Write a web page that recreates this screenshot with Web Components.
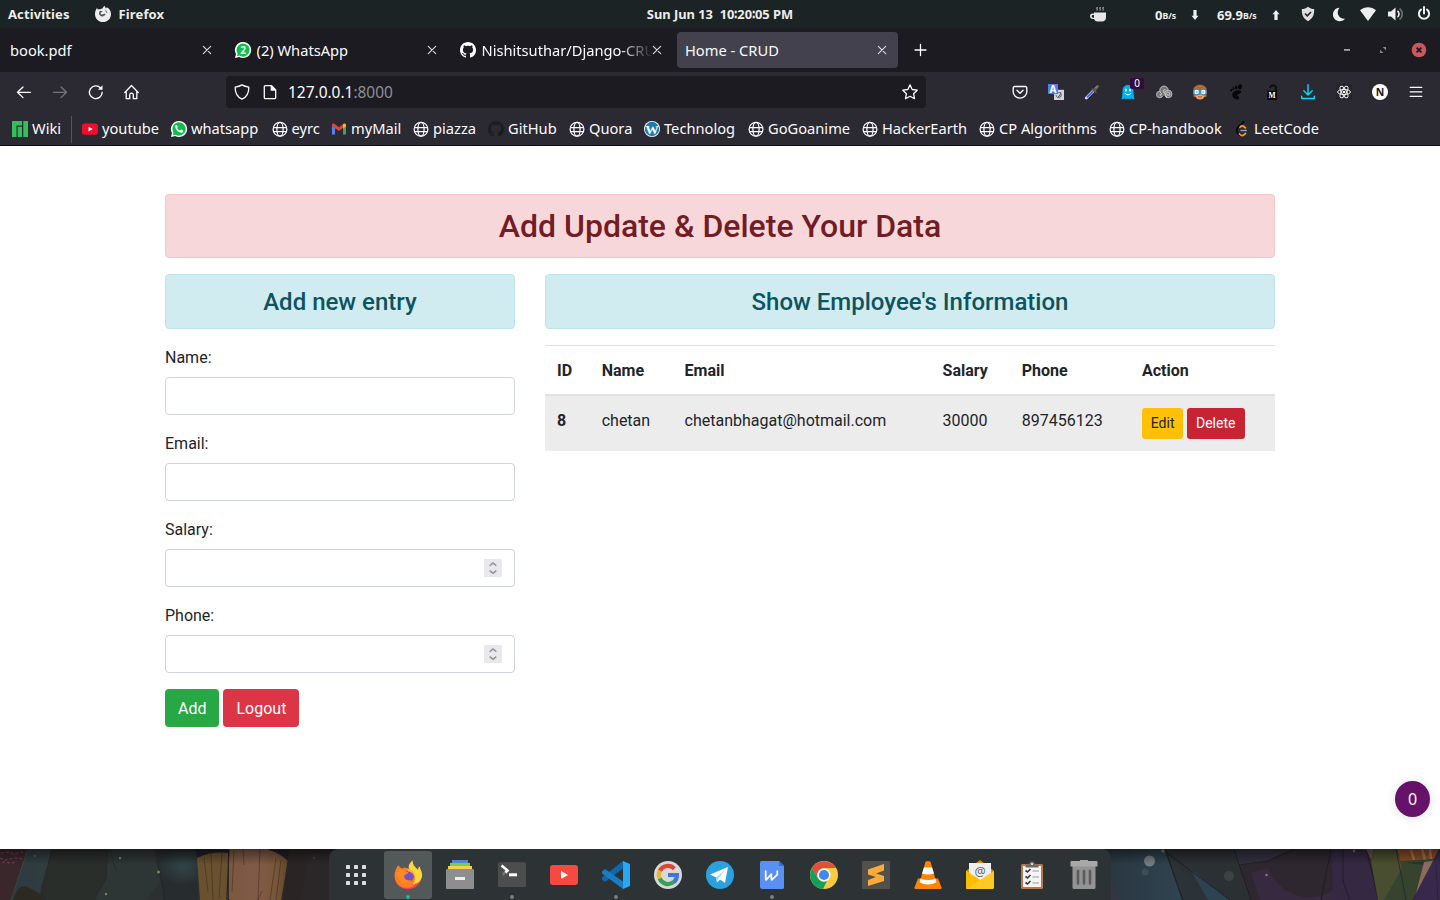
<!DOCTYPE html>
<html lang="en">
<head>
<meta charset="utf-8">
<title>Home - CRUD</title>
<style>
html,body{margin:0;height:100%;overflow:hidden}
body{font-family:"Noto Sans",sans-serif}
</style>
</head>
<body>
<desktop-screen></desktop-screen>
<script>
const define = (name, html, setup) => {
  const t = document.createElement('template');
  t.innerHTML = html;
  customElements.define(name, class extends HTMLElement {
    connectedCallback() {
      if (this.shadowRoot) return;
      this.attachShadow({mode: 'open'}).append(t.content.cloneNode(true));
      if (setup) setup(this, this.shadowRoot);
    }
  });
};

const globe = '<g fill="none" stroke="#fbfbfe" stroke-width="1.25"><circle cx="8" cy="8.300" r="6.9"/><ellipse cx="8" cy="8.300" rx="3.1" ry="6.9"/><path d="M1.3 6.5h13.4M1.3 10.5h13.4"/></g>';
const cat = 'M8 0C3.58 0 0 3.58 0 8c0 3.54 2.29 6.53 5.47 7.59.4.07.55-.17.55-.38 0-.19-.01-.82-.01-1.49-2.01.37-2.53-.49-2.69-.94-.09-.23-.48-.94-.82-1.13-.28-.15-.68-.52-.01-.53.63-.01 1.08.58 1.23.82.72 1.21 1.87.87 2.33.66.07-.52.28-.87.51-1.07-1.78-.2-3.64-.89-3.64-3.95 0-.87.31-1.59.82-2.15-.08-.2-.36-1.02.08-2.12 0 0 .67-.21 2.2.82.64-.18 1.32-.27 2-.27s1.36.09 2 .27c1.53-1.04 2.2-.82 2.2-.82.44 1.1.16 1.92.08 2.12.51.56.82 1.27.82 2.15 0 3.07-1.87 3.75-3.65 3.95.29.25.54.73.54 1.48 0 1.07-.01 1.93-.01 2.2 0 .21.15.46.55.38A8.01 8.01 0 0 0 16 8c0-4.42-3.58-8-8-8z';
const line = (d, w = 1.3, c = '#fbfbfe') => `<path d="${d}" fill="none" stroke="${c}" stroke-width="${w}" stroke-linecap="round" stroke-linejoin="round"/>`;

/* 16-unit glyphs */
const small = {
  globe,
  foxmono: '<path fill="#ededed" d="M9.3-.2c.9.9 1.300 2 1.500 2.800.6-.3.900-.7 1-1.300C14.800 2.800 16 5.300 16 8.200 16 12.600 12.400 16 8 16S0 12.600 0 8.200c0-2.500.8-4.700 2-6.100l.8 1.500c.700-.3 1.500-.3 2.300-.1.700-.6 1.500-.9 2.400-.9.300-1 .9-1.800 1.800-2.800z"/><path d="M5 4.800c1 .3 1.900.2 2.700.8-.7.900-1.900.6-2.200 1.600.4 1.300 2 1.700 3.200.9.700-.4 1.300-.3 1.800 0-.5 1.600-2.100 2.600-3.800 2.300C4.900 10 3.700 8.600 4 6.800c.2-.7.500-1.500 1-2zM9.500 3.500c1.800.9 2.800 2.300 2.900 4.200-.3-.7-.7-1.200-1.400-1.500-.1-1.100-.6-1.900-1.500-2.700z" fill="#1c2324" opacity=".75"/>',
  coffee: '<path fill="#e6e6e6" d="M4 6.500h12v5a4.200 4.200 0 0 1-4.200 4H8.200A4.200 4.200 0 0 1 4 13H3a3 3 0 0 1-3-2.700A2.700 2.700 0 0 1 2.700 7.500H4zM4 9H3a1.300 1.300 0 1 0 0 2.700h1z"/><path d="M7 4.500c.8-1-.8-1.800.3-3.500M10 4.500c.8-1-.8-1.800.3-3.500M13 4.500c.8-1-.8-1.800.3-3.500" fill="none" stroke="#ccc" stroke-width="1"/>',
  down: '<path fill="#eee" d="M6.400 4h3.200v5.800h1.900L8 14 4.500 9.800h1.900z"/>',
  up: '<path fill="#eee" d="M6.400 14h3.200V8.300h1.900L8 4 4.500 8.300h1.900z"/>',
  guard: '<path fill="#dedede" d="M8 .8c1.900 1.600 3.900 2.300 6.200 2.300.1 5.300-1 9.300-6.200 12.100C2.800 12.400 1.700 8.400 1.800 3.100 4.100 3.100 6.100 2.400 8 .8z"/><path d="M5 7.500l2.300 2.300L11 6" fill="none" stroke="#222" stroke-width="1.600"/>',
  moon: '<path fill="#f0f0f0" d="M8.600 1.700a6.800 6.800 0 1 0 5.400 11.100C7.900 13.300 4.300 6.500 8.600 1.700z"/>',
  wifi: '<path fill="#eee" d="M0 4.300C4.700.2 11.300.2 16 4.300L8 15z"/>',
  volume: '<path fill="#eee" d="M0 5.500h3L7.500 1.500v13L3 10.500H0z"/><path d="M9.500 4.800c2 1.600 2 4.800 0 6.400" fill="none" stroke="#eee" stroke-width="1.600"/><path d="M11.600 2.300c3.500 3 3.500 8.400 0 11.400" fill="none" stroke="#6c7273" stroke-width="1.600"/>',
  power: '<path d="M5 3.600a5.100 5.100 0 1 0 6 0M8 1v6.500" fill="none" stroke="#eee" stroke-width="2" stroke-linecap="round"/>',
  close: line('M4.300 4.300l7.400 7.400M11.700 4.300l-7.400 7.400', 1.100, '#dddce2'),
  plus: line('M7.500 2.500v11M2 8h11', 1.300),
  watwo: '<path fill="#fff" d="M8 0a8 8 0 1 1-3.700 15L0 16l1-4A8 8 0 0 1 8 0z"/><path fill="#0cbf4a" d="M8 1.400a6.600 6.600 0 1 1-3.500 12.200L1.900 14.200l.7-2.700A6.600 6.600 0 0 1 8 1.400z"/><text x="8" y="11.600" font-family="Open Sans,sans-serif" font-size="10" font-weight="700" text-anchor="middle" fill="#fff">2</text>',
  cat: `<path fill="#fff" d="${cat}"/>`,
  catdark: `<path fill="#1b1c20" d="${cat}"/>`,
  min: '<path fill="#a5a4a9" d="M5 7h6v1.800H5z"/>',
  max: '<path fill="#8e8d93" d="M7.700 5H11v3.300zM5 7.700V11h3.300z"/>',
  winclose: '<circle cx="8" cy="8" r="7.300" fill="#cc575d"/><path d="M5.600 5.600l4.800 4.800m0-4.800l-4.800 4.800" stroke="#1c1b22" stroke-width="1.900"/>',
  back: line('M14.500 8.300H1.500M7 3L1.500 8.300 7 13.600'),
  forward: line('M1.500 8.300h13M9 3L14.500 8.300 9 13.600', 1.300, '#77767e'),
  reload: line('M14.200 8.300A6.400 6.400 0 1 1 12.600 4', 1.350) + '<path fill="#fbfbfe" d="M14.500 1.200v4.600H9.900z"/>',
  home: line('M.8 8.500L7.500 1.500l6.700 7M2.200 7.500v7.200h3.500v-3.800a1.800 1.800 0 0 1 3.600 0v3.800h3.500V7.500'),
  shield: line('M8 .9C5.500 2.400 3.200 2.900 1.200 3.200 1 8.700 3 12.800 8 15.200c5-2.400 7-6.500 6.800-12C12.800 2.900 10.500 2.400 8 .9z'),
  page: line('M9.500 1.700H3.300a1 1 0 0 0-1 1v11a1 1 0 0 0 1 1h9.400a1 1 0 0 0 1-1V6z') + '<path fill="#fbfbfe" d="M8.700 1.500h1.200L14 5.700v1H8.700z"/>',
  star: line('M8 .9l2.200 4.600 5 .7-3.600 3.500.9 5L8 12.300l-4.500 2.400.9-5L.8 6.200l5-.7z'),
  pocket: line('M2.500 2.500h11a1.300 1.300 0 0 1 1.300 1.300v4a6.800 6.300 0 0 1-13.600 0v-4a1.300 1.300 0 0 1 1.300-1.300zM5 6.300l3 3 3-3', 1.350),
  translate: '<path fill="#d3d5d9" d="M6 5.800h10V16H6z"/><path d="M9 10c2-3 5-1 4 2s-4 2-2 0M8 11c1 4 3 3 5-3" fill="none" stroke="#4e6175"/><path fill="#4f7df2" d="M0 0h10v10H0z"/><text x="5" y="8.700" font-family="Noto Sans" font-size="10" font-weight="700" text-anchor="middle" fill="#fff">A</text>',
  picker: '<path d="M2.300 14L9 7.300" stroke="#dedff5" stroke-width="2.800" stroke-linecap="round"/><path d="M3 13.300l6-6" stroke="#3c63e0" stroke-width="1.800"/><path d="M8.500 5l3.300 3.300" stroke="#4f4c4a" stroke-width="2" stroke-linecap="round"/><path d="M10.500 6L13.500 2.500" stroke="#5f5c59" stroke-width="3" stroke-linecap="round"/><path d="M11.500 4l2-2" stroke="#a5a09c" stroke-width="1"/>',
  ghost: '<path fill="#00b2f2" d="M2.500 7.300C2.500 3 5 1 8 1s5.500 2 5.500 6.300c0 2.700.2 5 1 7.700-1.500.6-2.400.1-3.200-.7-.9 1.200-2 1.500-3.300.3-1.300 1.200-2.400.9-3.300-.3-.8.800-1.700 1.300-3.200.7.800-2.700 1-5 1-7.700z"/><path d="M6 4.800v2.400M10 4.800v2.400" stroke="#fff" stroke-width="1.700"/><path d="M5 9c1 2.400 5 2.400 6 0" fill="none" stroke="#fff"/>',
  spiral: '<g fill="#77777a" stroke="#c6c6c6" stroke-width=".9"><circle cx="3.700" cy="10.500" r="3.200"/><circle cx="8" cy="6.300" r="4.200"/><circle cx="12.300" cy="10" r="3.700"/></g><path fill="#77777a" d="M6 8h5v4H6z"/><path d="M9.500 8c-3 1-3-3 0-2.200M12 10c-1.500 2 2 2.300 1.900 0-.2-3.200-5-2-3.900 1.200M4 10.500c-.5 1.400 1.600 1 1-.3M8 8l3 6" fill="none" stroke="#ddd" stroke-width=".9"/>',
  face: '<path fill="#b06a2c" d="M1 8C1 3 4 .8 8 .8S15 3 15 8l-.7 5H1.700z"/><path fill="#eaa76b" d="M3.400 6h9.200v5.500c0 2.600-2.300 4-4.600 4s-4.600-1.400-4.600-4z"/><circle cx="4.700" cy="8" r="2.900" fill="#fff" stroke="#3b87c6" stroke-width="1.200"/><circle cx="11.300" cy="8" r="2.900" fill="#fff" stroke="#3b87c6" stroke-width="1.200"/><circle cx="5" cy="8" r=".8" fill="#338fcf"/><circle cx="11" cy="8" r=".8" fill="#338fcf"/><path d="M6 12.900h4" stroke="#b24b39"/>',
  foot: '<g fill="#08080a"><ellipse cx="12" cy="2.700" rx="2" ry="2.700" transform="rotate(20 12 2.700)"/><ellipse cx="8.200" cy="3.300" rx="1.200" ry="1.900"/><ellipse cx="5.500" cy="4.500" rx="1" ry="1.600"/><ellipse cx="3.300" cy="6.200" rx=".9" ry="1.400"/><path d="M12.700 6.800C9 4.800 4 8 4.200 11c.2 2.700 3 4.700 5.300 4.400 2-.3 2.400-2.500.6-3.100-1.200-.4-1.600-1.200-.3-1.700 2.200-.8 4.700-2.600 2.900-3.800z"/></g>',
  lock: '<path d="M11.800 7V3.500C11.500.3 6.500.5 6 4" fill="none" stroke="#08080a" stroke-width="1.700"/><path fill="#08080a" d="M3.300 6.800h9.700V16H3.300z"/><text x="8.100" y="14" font-family="Liberation Serif" font-size="7.500" font-weight="700" text-anchor="middle" fill="#fff">M</text>',
  download: '<path d="M8 .8v10M3.800 6.800L8 11l4.200-4.200M1.700 12.300v2.200h12.600v-2.200" fill="none" stroke="#00ddff" stroke-width="1.400" stroke-linecap="round" stroke-linejoin="round"/>',
  react: '<path fill="#25242b" d="M0 0h16v16H0z"/><g fill="none" stroke="#eee" stroke-width="1"><ellipse cx="8" cy="8" rx="6.500" ry="2.500"/><ellipse cx="8" cy="8" rx="6.500" ry="2.500" transform="rotate(60 8 8)"/><ellipse cx="8" cy="8" rx="6.500" ry="2.500" transform="rotate(120 8 8)"/></g><circle cx="8" cy="8" r="1.300" fill="#fff"/>',
  nletter: '<circle cx="8" cy="8" r="8" fill="#fff"/><text x="8" y="11.700" font-family="Noto Sans" font-size="10.500" font-weight="700" text-anchor="middle" fill="#1c1b22">N</text>',
  menu: line('M2.200 3.300h11.600M2.200 7.800h11.600M2.200 12.300h11.600', 1.300),
  manjaro: '<path fill="#35bf5c" d="M0 0h10v4.500H4.500V16H0zM5.700 5.700H10V16H5.700zM11.300 0H16v16h-4.700z"/>',
  youtube: '<rect y="2.400" width="16" height="11.400" rx="2.800" fill="#f60b2b"/><path fill="#fff" d="M6.500 5.700l4.200 2.400-4.200 2.400z"/>',
  whatsapp: '<path fill="#fff" d="M8 0a8 8 0 1 1-3.700 15L0 16l1-4A8 8 0 0 1 8 0z"/><path fill="#0cbf4a" d="M8 1.300a6.700 6.700 0 1 1-3.500 12.400l-2.700.5.700-2.600A6.700 6.700 0 0 1 8 1.300z"/><path fill="#fff" d="M4.400 4.500c.8-1 1.500-.8 1.800-.1l.6 1.500c0 .4-.5.700-.6 1 .7 1.300 1.600 2.100 2.900 2.600.4-.2.700-.8 1.100-.9l1.800.9c.5.500 0 1.800-1 2.200-3 .9-7.700-3.800-6.600-7.200z"/>',
  gmail: '<path fill="#4f83ee" d="M1 4.500v9h3V7z"/><path fill="#3ba653" d="M12 7v6.500h3v-9z"/><path fill="#e54335" d="M1 3.400c.2-1 1.500-1.300 2.300-.7L8 6.300l4.700-3.600L12.900 6.300 8 10 1 5z"/><path fill="#f6bc16" d="M12 3.300c1-1.300 3-.9 3 .9v1.300L12 7.500z"/>',
  wordpress: '<circle cx="8" cy="8" r="8" fill="#fff"/><circle cx="8" cy="8" r="7.200" fill="#1b7db1"/><text x="8" y="12.600" font-family="Liberation Serif" font-size="13.500" font-weight="700" text-anchor="middle" fill="#fff">W</text>',
  leetcode: '<path d="M9.500 1L4 6.500c-2.500 2.700-1.500 4.200.3 6.100L6 14.300" fill="none" stroke="#08080a" stroke-width="1.900" stroke-linecap="round"/><path d="M6 6.300c1.300-1.600 2.700-1.900 4.200-.5l1.200 1.100M5.500 13c1.800 2 3.400 2 5 .4l.9-.9" fill="none" stroke="#f6a21c" stroke-width="1.800" stroke-linecap="round"/><path d="M6.500 9.500H13" stroke="#9b9ba0" stroke-width="1.500"/>',
  more: line('M2.500 2.500L8 8l-5.500 5.500M8.500 2.500L14 8l-5.500 5.500', 1.250),
  spin: '<path d="M4.700 5.800L8 3l3.300 2.800M4.700 10.600L8 13.300l3.300-2.700" fill="none" stroke="#8d8d97" stroke-width="1.400"/>'
};

/* 28-unit launcher artwork */
const large = {
  apps: '<g fill="#dedede">' + [4, 12, 20].map(y => [4, 12, 20].map(x => `<rect x="${x}" y="${y}" width="4" height="4" rx=".4"/>`).join('')).join('') + '</g>',
  firefox: '<path fill="#ee405c" d="M1 17C2 24 7 28.200 14 28.200S27.500 23 27.700 15L26 10z"/><path fill="#ff7d22" d="M4 4.200l4 3.600c2-2 4-1.700 6 .2 4 1 8.600 4 9 9.500.2 5-4 9.600-9.500 9.600C6 27 .7 22 .5 15 .4 10.500 2.500 7 4 4.200z"/><path fill="#ffd83c" d="M18.500-.8c-3 3-5 6-3 9.300 1 2 5.500 4 5.500 8 0 2.800-1 5-2 6.300 4 1 8.900-3 9.100-8.500.2-4.300-2.500-5.800-2-8.800-1.500.6-2 2-2 3.200C22 6.700 18.700 4.700 18.500-.8z"/><circle cx="14.300" cy="15.200" r="5.600" fill="#7b4ec4"/><path fill="#ff8a24" d="M4 8.500c3-1 6 1 10 2.500 1 2-3 2-3.500 3.600-1.500 2.500 2 6.200 7 4.400-1.500 3-6 4.500-10 2.500-4-3-5-8-3.500-13z"/><path fill="#ffac31" d="M13 7.500c6 1 9 5.500 7.700 10.200C20.700 13 17.500 11 14 10.500z"/>',
  files: '<path fill="#5485d5" d="M6-1h16v4H6z"/><path fill="#76cf51" d="M4 2h20v3.500H4z"/><path fill="#f8cf52" d="M2 5h24v4H2z"/><rect y="8" width="28" height="20" rx="1" fill="#8e8e8e"/><rect x="9" y="16" width="10" height="3" fill="#eee"/>',
  terminal: '<rect y="1.300" width="28" height="24.700" rx="1.500" fill="#4d4d4d"/><path fill="#777" d="M4 12.500l5-4v2.500l-3.500 4z"/><path d="M3.500 4.500l6 5-2 2" fill="none" stroke="#fff" stroke-width="2.600"/><path fill="#fff" d="M11 12.300h8v3h-8z"/>',
  ytube: '<rect y="4" width="28" height="20" rx="3" fill="#f64a40"/><path fill="#fff" d="M11 10l7 4-7 4z"/>',
  vscode: '<path fill="#0f68ad" d="M21 0v7.500L3 21 0 18.500v-2z"/><path fill="#1a7cc4" d="M3 8L0 10.500v2L21 28v-7.500z"/><path fill="#2aa7f3" d="M21 0l7 3v22l-7 3z"/>',
  google: '<circle cx="14" cy="14" r="14" fill="#d8d8d8"/><g fill="none" stroke-width="4.200"><path stroke="#df4335" d="M5.700 10a9 9 0 0 1 14.600-2.300"/><path stroke="#eeb52b" d="M5.900 18a9 9 0 0 1 0-8.500"/><path stroke="#38a054" d="M20 20.800A9 9 0 0 1 5.700 17.500"/><path stroke="#3f76d8" d="M14 14h9a9 9 0 0 1-3 6.900"/></g>',
  telegram: '<circle cx="14" cy="14" r="14" fill="#2aa2df"/><path fill="#fff" d="M4 13.500L22 6l-3 16-5-3.500-3 3-.8-5z"/><path d="M10 16.500l9-7.500-7 9-1 3.500z" fill="#a8d7ee"/>',
  writer: '<path fill="#5a8ff3" d="M3.500 0H21l5 5v21.500a1.500 1.500 0 0 1-1.500 1.500h-20A2.500 2.500 0 0 1 2 25.500v-24A1.500 1.500 0 0 1 3.500 0z"/><path fill="#3970d1" d="M21 0l5 5h-5z"/><path d="M7.700 9.500v8.800q0 1 .7.300l5-5.500v5.200q0 1 .7.300l5.200-5V9.500" fill="none" stroke="#fff" stroke-width="1.700" stroke-linejoin="round"/>',
  chrome: '<circle cx="14" cy="14" r="14" fill="#fcca3f"/><path fill="#dd4f41" d="M1.900 7A14 14 0 0 1 26 7H14a7 7 0 0 0-6 10.500z"/><path fill="#139f5d" d="M1.900 7l6.100 10.500A7 7 0 0 0 17 20l-4 8A14 14 0 0 1 1.900 7z"/><circle cx="14" cy="14" r="6.500" fill="#fff"/><circle cx="14" cy="14" r="5.100" fill="#4387ef"/>',
  sublime: '<rect width="28" height="28" rx="1" fill="#50504f"/><path fill="#fdaa38" d="M6 8.500L22 3v6.500L14 12.500l8 2.500v5L6 25v-6l8-3-8-2.500z"/>',
  vlc: '<path fill="#ff8500" d="M4 17.500h20l3.500 9q.3 1.500-1 1.500H1.500q-1.300 0-1-1.500z"/><path fill="#ff8500" d="M11.500.8q2.500-1.600 5 0L22 20q-8 6-16 0z"/><path fill="#fff" d="M10 6.500h8l2 6q-6 2-12 0zM6.500 17.500q7.500 3 15 0l.9 3.800q-8.400 4.500-16.800 0z"/>',
  mail: '<path fill="#e48d00" d="M0 10L14-1l14 11v5H0z"/><path fill="#efefef" d="M3 2h22v17H3z"/><text x="14" y="14.500" font-family="Noto Sans" font-size="12.500" text-anchor="middle" fill="#6a6a6a">@</text><path fill="#ffc923" d="M0 10l14 9 14-9v16.500q0 1.500-1.500 1.500h-25Q0 28 0 26.500z"/><path fill="#ffbd00" d="M0 10l14 9L1 28q-1 0-1-1.500z"/>',
  tasks: '<rect x="3" y="3" width="22" height="25" rx="1.500" fill="#b9794c"/><path fill="#f4f4f4" d="M5 5h18v21H5z"/><path fill="#6b6b6b" d="M7.500 3.500H11a3 3 0 0 1 6 0h3.500v3h-13z"/><circle cx="14" cy="3" r="1" fill="#fff"/><path d="M7.500 9.500l2 1.500 3-3M7.500 15.500l2 1.500 3-3M7.500 21.500l2 1.500 3-3" fill="none" stroke="#3b3b3b" stroke-width="1.700"/><path d="M14.500 10h6.500M14.500 16h6.500M14.500 22h6.500" stroke="#b8b8b8" stroke-width="1.400"/>',
  trash: '<path fill="#939393" d="M2.500 5h23v21.500q0 1.500-1.500 1.500H4q-1.500 0-1.500-1.500z"/><path fill="#a8a8a8" d="M1.500 0H10v-1h8v1h8.500q1 0 1 1v4.500H.5V1q0-1 1-1z"/><path d="M8 10v12.500M14 10v12.500M20 10v12.500" stroke="#5c5c5c" stroke-width="2.600" stroke-linecap="round"/>'
};

define('ui-icon', `<style>:host{display:block;flex:none;width:16px;height:16px}:host([large]){width:28px;height:28px}svg{display:block;width:100%;height:100%;overflow:visible}</style><svg aria-hidden="true"></svg>`, (el, root) => {
  const big = el.hasAttribute('large'), s = root.querySelector('svg');
  s.setAttribute('viewBox', big ? '0 0 28 28' : '0 0 16 16');
  s.innerHTML = (big ? large : small)[el.getAttribute('name')] || '';
});

define('system-bar', `<style>
:host{display:grid;grid-template-columns:1fr auto 1fr;align-items:center;height:28px;background:#1c2324;color:#ededed;font:700 13px/28px "Noto Sans",sans-serif}
.l{display:flex;align-items:center;padding-left:8px;white-space:nowrap;letter-spacing:.12px}.l ui-icon{margin:0 8px 0 25px}
.c{white-space:pre;font-size:12.850px}
.r{justify-self:end;display:grid;grid-template-columns:65px 32px 30px 51px 32px 31px 29px 28px 28px 24px;align-items:center}
.r>span{display:flex;align-items:center;line-height:28px;height:28px;padding-top:2px;box-sizing:border-box}small{font-size:8.700px;padding-top:1px}
</style>
<div class="l"><span>Activities</span><ui-icon name="foxmono"></ui-icon><span>Firefox</span></div>
<div class="c">Sun Jun 13  10∶20∶05 PM</div>
<div class="r"><ui-icon name="coffee"></ui-icon><span>0<small>B/s</small></span><ui-icon name="down"></ui-icon><span>69.9<small>B/s</small></span><ui-icon name="up"></ui-icon><ui-icon name="guard"></ui-icon><ui-icon name="moon"></ui-icon><ui-icon name="wifi"></ui-icon><ui-icon name="volume"></ui-icon><ui-icon name="power"></ui-icon></div>`);

define('browser-tab', `<style>
:host{display:flex;align-items:center;box-sizing:border-box;width:221px;height:36px;margin:4px 2px;padding:0 8px;border-radius:4px;color:#fbfbfe;font:14.670px/36px "Noto Sans",sans-serif}
:host([active]){background:#42414d}
.t{flex:1;min-width:0;overflow:hidden;white-space:nowrap}
:host([clipped]) .t{margin-right:-4px;-webkit-mask:linear-gradient(90deg,#000 calc(100% - 34px),transparent);mask:linear-gradient(90deg,#000 calc(100% - 34px),transparent)}
::slotted(ui-icon){margin-right:5.500px}
</style><slot name="icon"></slot><div class="t"><slot></slot></div><ui-icon name="close"></ui-icon>`);

define('tab-strip', `<style>
:host{display:flex;height:44px;background:#1c1b22;align-items:center}
.add{margin-left:13px}.win{margin-left:auto;display:flex;gap:20px;padding-right:13px}
</style>
<browser-tab>book.pdf</browser-tab>
<browser-tab><ui-icon slot="icon" name="watwo"></ui-icon>(2) WhatsApp</browser-tab>
<browser-tab clipped><ui-icon slot="icon" name="cat"></ui-icon>Nishitsuthar/Django-CRUD</browser-tab>
<browser-tab active>Home - CRUD</browser-tab>
<ui-icon class="add" name="plus"></ui-icon>
<div class="win"><ui-icon name="min"></ui-icon><ui-icon name="max"></ui-icon><ui-icon name="winclose"></ui-icon></div>`);

define('nav-bar', `<style>
:host{display:flex;align-items:center;height:40px;background:#2b2a33;color:#fbfbfe}
.b{display:flex;gap:20px;padding-left:16px;width:226px;box-sizing:border-box}
.u{display:flex;align-items:center;box-sizing:border-box;width:700px;height:32px;border-radius:4px;background:#1c1b22;padding:0 8px;font:15.450px/32px "Noto Sans",sans-serif}
.u ui-icon{margin-right:12px}.u ui-icon:last-child{margin:0 0 0 auto}.u i{font-style:normal;color:#8f8f97}.u span{margin-left:-2px}
.x{display:flex;gap:20px;margin-left:auto;padding-right:16px}
.g{position:relative}.g b{position:absolute;left:10px;top:-6px;width:14px;height:11px;background:#330a3a;border-radius:2px;font:10px/11px "Noto Sans",sans-serif;text-align:center;color:#fff}
</style>
<div class="b"><ui-icon name="back"></ui-icon><ui-icon name="forward"></ui-icon><ui-icon name="reload"></ui-icon><ui-icon name="home"></ui-icon></div>
<div class="u"><ui-icon name="shield"></ui-icon><ui-icon name="page"></ui-icon><span>127.0.0.1<i>:8000</i></span><ui-icon name="star"></ui-icon></div>
<div class="x"><ui-icon name="pocket"></ui-icon><ui-icon name="translate"></ui-icon><ui-icon name="picker"></ui-icon><div class="g"><ui-icon name="ghost"></ui-icon><b>0</b></div><ui-icon name="spiral"></ui-icon><ui-icon name="face"></ui-icon><ui-icon name="foot"></ui-icon><ui-icon name="lock"></ui-icon><ui-icon name="download"></ui-icon><ui-icon name="react"></ui-icon><ui-icon name="nletter"></ui-icon><ui-icon name="menu"></ui-icon></div>`);

define('book-mark', `<style>:host{display:flex;align-items:center;gap:4px;white-space:nowrap;height:34px;color:#fbfbfe;font:14.670px/32px "Noto Sans",sans-serif}span{height:34px}</style><ui-icon></ui-icon><span><slot></slot></span>`, (el, root) => {
  const old = root.querySelector('ui-icon'), i = document.createElement('ui-icon');
  i.setAttribute('name', el.getAttribute('icon')); old.replaceWith(i);
});

define('bookmark-bar', `<style>
:host{display:grid;grid-template-columns:59px 11px 89px 100.500px 59.500px 82px 75px 81px 75px 104px 114px 117px 130px 125px 1fr;align-items:center;height:34px;box-sizing:border-box;padding:0 12px 1px;background:#2b2a33;border-bottom:1px solid #0c0c0d}
.s{width:1px;height:27px;background:#55545e}.m{justify-self:end}
</style>
<book-mark icon="manjaro">Wiki</book-mark><div class="s"></div>
<book-mark icon="youtube">youtube</book-mark><book-mark icon="whatsapp">whatsapp</book-mark><book-mark icon="globe">eyrc</book-mark><book-mark icon="gmail">myMail</book-mark><book-mark icon="globe">piazza</book-mark><book-mark icon="catdark">GitHub</book-mark><book-mark icon="globe">Quora</book-mark><book-mark icon="wordpress">Technolog</book-mark><book-mark icon="globe">GoGoanime</book-mark><book-mark icon="globe">HackerEarth</book-mark><book-mark icon="globe">CP Algorithms</book-mark><book-mark icon="globe">CP-handbook</book-mark><book-mark icon="leetcode">LeetCode</book-mark><ui-icon class="m" name="more"></ui-icon>`);

define('alert-box', `<style>
:host{display:block;box-sizing:border-box;padding:13px 20px 11px;margin-bottom:16px;border:1px solid #bee5eb;border-radius:4px;background:#d1ecf1;color:#0c5460;text-align:center;font-size:24px;line-height:1.2;font-weight:500}
:host([danger]){padding:12px 20px;background:#f8d7da;border-color:#f5c6cb;color:#721c24;font-size:32px}
</style><slot></slot>`);

define('form-field', `<style>
:host{display:block;margin-bottom:16px}label{display:block;height:24px;line-height:26px;margin-bottom:8px}
.f{display:flex;align-items:center;height:38px;box-sizing:border-box;border:1px solid #ced4da;border-radius:4px;background:#fff;padding:0 12px}
input{flex:1;min-width:0;border:0;outline:0;background:none;font:inherit}
.s{display:none;place-items:center;width:18px;height:18px;background:#e9e9ed}:host([number]) .s{display:grid}
</style><label><slot></slot></label><div class="f"><input type="text"><div class="s"><ui-icon name="spin"></ui-icon></div></div>`);

define('action-button', `<style>
:host{display:inline-block;box-sizing:border-box;padding:8px 13px 6px;border-radius:4px;color:#fff;background:#28a745;line-height:24px}
:host([kind=danger]){background:#dc3545}
:host([small]){padding:5px 9px;border-radius:3.200px;font-size:14px;line-height:21px}
:host([kind=edit]){background:#ffc107;color:#212529;padding:5px 8.500px 5px 8.800px}
:host([kind=delete]){background:#c82333;padding:5px 9.300px 5px 9px}
</style><slot></slot>`);

define('employee-table', `<style>
:host{display:block}
table{width:730px;border-collapse:collapse;table-layout:fixed;color:#212529}
th,td{padding:13px 12px 11px;border-top:1px solid #dee2e6;text-align:left;vertical-align:top;font-weight:400}
th{font-weight:700}thead th{vertical-align:bottom;border-bottom:2px solid #dee2e6}
tbody tr{background:#ececec}.c{padding:12px}.a{display:flex;gap:4px}
</style>
<table><colgroup><col style="width:44.700px"><col style="width:82.900px"><col style="width:258px"><col style="width:79.200px"><col style="width:120.200px"><col></colgroup>
<thead><tr><th>ID</th><th>Name</th><th>Email</th><th>Salary</th><th>Phone</th><th>Action</th></tr></thead>
<tbody><tr><th>8</th><td>chetan</td><td>chetanbhagat@hotmail.com</td><td>30000</td><td>897456123</td><td class="c"><div class="a"><action-button small kind="edit">Edit</action-button><action-button small kind="delete">Delete</action-button></div></td></tr></tbody></table>`);

define('crud-page', `<style>
:host{display:block;position:relative;box-sizing:border-box;height:703px;padding:48px 165px 0;background:#fff;color:#212529;font:16px/24px Roboto,sans-serif}
.row{display:grid;grid-template-columns:350px 730px;gap:30px}.btns{display:flex;gap:4px}
.fab{position:absolute;right:10px;top:635px;width:35px;height:36px;border-radius:50%;background:#66116a;color:#fff;font:16px/36px "Noto Sans",sans-serif;text-align:center;box-shadow:0 1px 10px #0002}
</style>
<alert-box danger>Add Update &amp; Delete Your Data</alert-box>
<div class="row"><section><alert-box>Add new entry</alert-box>
<form-field>Name:</form-field><form-field>Email:</form-field><form-field number>Salary:</form-field><form-field number>Phone:</form-field>
<div class="btns"><action-button>Add</action-button><action-button kind="danger">Logout</action-button></div></section>
<section><alert-box>Show Employee's Information</alert-box><employee-table></employee-table></section></div>
<div class="fab">0</div>`);

define('wall-paper', `<style>:host{display:block}svg{display:block}</style>
<svg width="1440" height="51" viewBox="0 0 1440 51"><defs>
<linearGradient id="sh" x2="0" y2="1"><stop stop-color="#000" stop-opacity=".45"/><stop offset=".3" stop-color="#000" stop-opacity="0"/></linearGradient>
<linearGradient id="wd"><stop stop-color="#7b5840"/><stop offset=".55" stop-color="#805a47"/><stop offset=".8" stop-color="#775638"/><stop offset="1" stop-color="#604727"/></linearGradient>
<linearGradient id="tl"><stop stop-color="#2c3b40"/><stop offset="1" stop-color="#303d40"/></linearGradient>
<linearGradient id="bl"><stop stop-color="#293640"/><stop offset="1" stop-color="#2f4350"/></linearGradient>
<radialGradient id="gl"><stop stop-color="#304548"/><stop offset="1" stop-color="#304548" stop-opacity="0"/></radialGradient></defs>
<path fill="#2c3030" d="M0 0h1440v51H0z"/>
<path fill="#3a272b" d="M0 0h27L10 51H0z"/><path fill="url(#tl)" d="M27 0h25L40 51H11z"/><path d="M27 3L11 51" stroke="#5a4431" opacity=".6"/>
<path d="M1 4l8-1 5 2 9-2M0 9l6 2 8-2 10 1M2 13l10 1 5-2" fill="none" stroke="#8a4656" stroke-width="1.500" stroke-dasharray="3 2" opacity=".6"/>
<path fill="#2b2922" d="M13 51q5-17 15-13l14 8 4 5z"/><path fill="#2a2e2b" d="M52 0h55l-1 28-10 17v6H43q-4-5-2-9z"/><path fill="#2d3535" d="M108 0h46l6 33-14 18H96l10-20z"/><path fill="#272c2e" d="M155 0h43v51h-34l-3-16z"/>
<ellipse cx="183" cy="18" rx="26" ry="18" fill="url(#gl)"/>
<path d="M52 0L41 42l4 9M108 0l-2 29-10 17M110 1l6 21M157 11l7 30v10" fill="none" stroke="#1f2222" opacity=".45"/>
<path fill="#211f2a" d="M195 0h94v14l-91-3z"/><path fill="#69502f" d="M197 9q15-7 31-5v47h-28z"/><path fill="url(#wd)" d="M229 0h38q14 5 21 12l-7 39h-52z"/>
<path d="M229 0l-2 50 3 1" fill="none" stroke="#2b2020" stroke-width="1.200"/>
<path d="M211 5l2 46M222 4l-3 46M234 1l-2 42M243 0l1 16M260 0l-2 51M276 9l-6 42M281 11l-5 40M204 9l4 34M262 42l-4 9" fill="none" stroke="#38281f" opacity=".5"/>
<path fill="#2b2425" d="M289 0h62v51h-69z"/><path fill="#2b2729" d="M310 5h32v46h-42z"/>
<g fill="#85805c"><circle cx="120" cy="9" r="1.200"/><circle cx="158.500" cy="23" r="1.500"/><circle cx="106" cy="45" r="1.200"/><circle cx="35" cy="7" r="1" opacity=".5"/><circle cx="314" cy="9" r="1" opacity=".4"/></g>
<path fill="url(#bl)" d="M1100 0h64l18 51h-82z"/><path fill="#3a3442" d="M1110 26l9 25h-9z" opacity=".7"/><path fill="#2b3033" d="M1165 0h70l16 51h-69z"/><path fill="#2c4352" d="M1190 20l40 31h-22z"/><path fill="#2b3338" d="M1168 5l40 46h-26z"/>
<path fill="#33303f" d="M1234 0h60l-26 12-29 5z"/><path fill="#2f2730" d="M1293 0h76l9 51h-127l-12-34 29-5z"/><path fill="#37293f" d="M1251 24l17-5q10 24 35 29 24 2 36-13l-2 16h-77z"/><path fill="#38294a" d="M1332 0h35l10 51h-44z" opacity=".75"/>
<path d="M1165 0l18 51M1167 4l63 47M1234 0l17 51M1239 16l29-4 26-12M1331 0l-10 51M1343 0v32l7 19M1366 0l13 51" fill="none" stroke="#1c1a20" stroke-width="1" opacity=".75"/>
<path fill="#67504b" d="M1366 0h8l-3 11z"/><path fill="#4a4e30" d="M1374 0h22l7 18-18 33h-7l-7-39z"/><path fill="#36432e" d="M1401 13l24 3-11 35h-30l17-30z"/><path fill="#864b25" d="M1397 0h42l-4 10-34 4z"/><path d="M1411 1l3 10M1422 0l3 11M1430 0l1 10" stroke="#a0714f" stroke-width="2.500"/><path d="M1400 13l36-2" stroke="#36472d" stroke-width="2"/><path fill="#896b5f" d="M1424 13l12-2-21 37z"/><path fill="#38294c" d="M1440 0v51h-27z"/><path d="M1396 0l10 51M1439 1l-26 50M1436 15l2 36" fill="none" stroke="#26202c" opacity=".7"/>
<circle cx="1149.500" cy="12" r="5.500" fill="#747b83"/><circle cx="1145" cy="23" r="3.500" fill="#3d4c58"/><circle cx="1229" cy="27" r="5" fill="#3d4142"/><circle cx="1163" cy="2" r="1.600" fill="#777f82"/><circle cx="1266.500" cy="26" r="1.200" fill="#92816e"/><circle cx="1354" cy="2" r="1.200" fill="#8d775b"/>
<path fill="url(#sh)" d="M0 0h1440v51H0z"/></svg>`);

define('dock-item', `<style>
:host{display:grid;place-items:center;position:relative;width:48px;height:48px;border-radius:3px}
:host([active]){background:#535958}
i{display:none;position:absolute;left:22px;bottom:0;width:4px;height:4px;border-radius:50%;background:#7b8081}
:host([running]) i{display:block}:host([active]) i{background:#25b89a}
</style><slot></slot><i></i>`);

define('app-dock', `<style>
:host{display:grid;height:51px;overflow:hidden}
wall-paper,.d{grid-area:1/1}
.d{justify-self:center;position:relative;display:flex;gap:4px;box-sizing:border-box;width:782px;height:51px;padding:2px 3px;background:#2d3335;border-radius:9px 9px 0 0}
</style><wall-paper></wall-paper><div class="d"></div>`, (el, root) => {
  const d = root.querySelector('.d');
  for (const [n, s] of [['apps', ''], ['firefox', 'active running'], ['files', ''], ['terminal', 'running'], ['ytube', ''], ['vscode', 'running'], ['google', ''], ['telegram', ''], ['writer', 'running'], ['chrome', ''], ['sublime', ''], ['vlc', ''], ['mail', ''], ['tasks', ''], ['trash', '']])
    d.insertAdjacentHTML('beforeend', `<dock-item ${s}><ui-icon large name="${n}"></ui-icon></dock-item>`);
});

define('desktop-screen', `<style>:host{display:flex;flex-direction:column;width:1440px;height:900px;overflow:hidden}system-bar,tab-strip,nav-bar,bookmark-bar,crud-page,app-dock{flex:none}</style>
<system-bar></system-bar><tab-strip></tab-strip><nav-bar></nav-bar><bookmark-bar></bookmark-bar><crud-page></crud-page><app-dock></app-dock>`);
</script>
</body>
</html>
